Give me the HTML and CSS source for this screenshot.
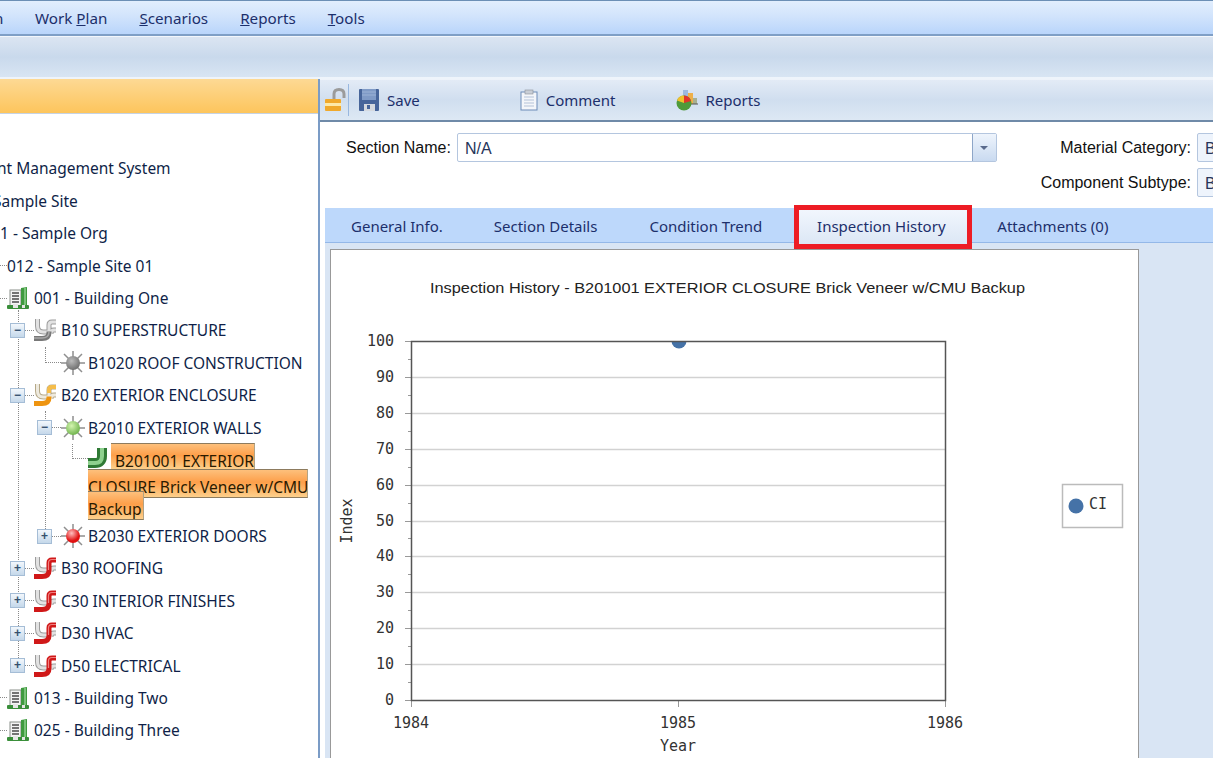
FILE: index.html
```html
<!DOCTYPE html>
<html lang="en">
<head>
  <meta charset="UTF-8">
  <title>Inspection History</title>
  <link rel="stylesheet" href="styles.css">
</head>
<body>
  <svg class="defs" width="0" height="0">
    <defs>
      <symbol id="building" viewBox="0 0 22 22">
        <rect x="3" y="3" width="11" height="16" fill="#f4f4f4" stroke="#8a8f8a"/>
        <path d="M5 6h7M5 9h7M5 12h7M5 15h7" stroke="#4a4a4a" stroke-width="1.600"/>
        <path d="M14 1l6 -1v20h-6z" fill="#3f9a3f"/>
        <path d="M18 1v18" stroke="#8fd08f" stroke-width="1.500"/>
        <rect x="0" y="18" width="22" height="4" rx="1" fill="#3a8f3a"/>
        <rect x="6" y="17" width="5" height="4" fill="#e6e6e6"/>
        <rect x="15" y="18" width="3" height="3" fill="#e6e6e6"/>
      </symbol>
      <symbol id="pipe-gray" viewBox="0 0 22 22">
        <path d="M3.500 0v7q0 6 6 6h4M22 3h-4q-3 0 -3 3v7M22 11h-2q-3 0 -3 3v1" fill="none" stroke="#9c9c9c" stroke-width="5"/>
        <path d="M3.500 0v7q0 6 6 6h4M22 3h-4q-3 0 -3 3v7M22 11h-2q-3 0 -3 3v1" fill="none" stroke="#e2e2e2" stroke-width="3"/>
        <path d="M0 19.500h8q7 0 7 -6v-1" fill="none" stroke="#787878" stroke-width="5"/>
        <path d="M0 19h8q7 0 7 -6" fill="none" stroke="#a8a8a8" stroke-width="1.500"/>
      </symbol>
      <symbol id="pipe-orange" viewBox="0 0 22 22">
        <path d="M3.500 0v7q0 6 6 6h4M22 3h-4q-3 0 -3 3v7M22 11h-2q-3 0 -3 3v1" fill="none" stroke="#b5a888" stroke-width="5"/>
        <path d="M3.500 0v7q0 6 6 6h4M22 3h-4q-3 0 -3 3v7M22 11h-2q-3 0 -3 3v1" fill="none" stroke="#eeeadf" stroke-width="3"/>
        <path d="M0 19.500h8q7 0 7 -6v-7q0 -3 3 -3h4" fill="none" stroke="#eda31c" stroke-width="0"/>
        <path d="M0 19.500h8q7 0 7 -6v-1" fill="none" stroke="#ee9410" stroke-width="5"/>
        <path d="M22 3h-4q-3 0 -3 3v3" fill="none" stroke="#f5bd4a" stroke-width="4"/>
      </symbol>
      <symbol id="pipe-red" viewBox="0 0 22 22">
        <path d="M3.500 0v7q0 6 6 6h4M22 11h-2q-3 0 -3 3v1" fill="none" stroke="#9c9c9c" stroke-width="5"/>
        <path d="M3.500 0v7q0 6 6 6h4M22 11h-2q-3 0 -3 3v1" fill="none" stroke="#e2e2e2" stroke-width="3"/>
        <path d="M22 3h-4q-3 0 -3 3v7.500q0 6 -7 6h-8" fill="none" stroke="#d01818" stroke-width="5"/>
        <path d="M22 2.500h-4q-3.500 0 -3.500 3.500v7" fill="none" stroke="#f08080" stroke-width="1.200"/>
      </symbol>
      <symbol id="sun" viewBox="0 0 24 24">
        <path d="M12 0v24M0 12h24M3 3l18 18M21 3L3 21" stroke="#8f8f8f" stroke-width="1.500"/>
      </symbol>
    </defs>
  </svg>

  <div class="menubar">
    <span class="menu-cut">n</span>
    <span class="menu-item">Work <u>P</u>lan</span>
    <span class="menu-item"><u>S</u>cenarios</span>
    <span class="menu-item"><u>R</u>eports</span>
    <span class="menu-item"><u>T</u>ools</span>
  </div>
  <div class="ribbon"></div>

  <div class="main">
    <div class="left">
      <div class="left-head"></div>
      <div class="tree">
        <span class="vline v1"></span>
        <span class="vline v2"></span>
        <div class="row"><span class="label cut-a">nt Management System</span></div>
        <div class="row"><span class="label cut-b">Sample Site</span></div>
        <div class="row"><span class="label">1 - Sample Org</span></div>
        <div class="row"><span class="dots short"></span><span class="label">012 - Sample Site 01</span></div>
        <div class="row"><span class="dots short"></span><svg class="ico"><use href="#building"/></svg><span class="label">001 - Building One</span></div>
        <div class="row lvl2"><span class="box">&minus;</span><span class="dots"></span><svg class="ico"><use href="#pipe-gray"/></svg><span class="label">B10 SUPERSTRUCTURE</span></div>
        <div class="row lvl3"><span class="elbow"></span><span class="sun"><svg class="ico"><use href="#sun"/></svg><i class="ball gray"></i></span><span class="label">B1020 ROOF CONSTRUCTION</span></div>
        <div class="row lvl2"><span class="box">&minus;</span><span class="dots"></span><svg class="ico"><use href="#pipe-orange"/></svg><span class="label">B20 EXTERIOR ENCLOSURE</span></div>
        <div class="row lvl3b"><span class="box">&minus;</span><span class="dots"></span><span class="sun"><svg class="ico"><use href="#sun"/></svg><i class="ball green"></i></span><span class="label">B2010 EXTERIOR WALLS</span></div>
        <div class="selected">
          <div class="sel-line first">
            <span class="elbow"></span>
            <svg class="ico elbow-pipe" viewBox="0 0 20 20"><path d="M14 0v8q0 7 -7 7h-7" fill="none" stroke="#2f7a35" stroke-width="10"/><path d="M14 0v8q0 7 -7 7h-7" fill="none" stroke="#8ed08e" stroke-width="4"/></svg>
            <span class="hl">B201001 EXTERIOR</span>
          </div>
          <div class="sel-line second"><span class="hl wide">CLOSURE Brick Veneer w/CMU</span></div>
          <div class="sel-line third"><span class="hl last">Backup</span></div>
        </div>
        <div class="row lvl3b"><span class="box">+</span><span class="dots"></span><span class="sun"><svg class="ico"><use href="#sun"/></svg><i class="ball red"></i></span><span class="label">B2030 EXTERIOR DOORS</span></div>
        <div class="row lvl2"><span class="box">+</span><span class="dots"></span><svg class="ico"><use href="#pipe-red"/></svg><span class="label">B30 ROOFING</span></div>
        <div class="row lvl2"><span class="box">+</span><span class="dots"></span><svg class="ico"><use href="#pipe-red"/></svg><span class="label">C30 INTERIOR FINISHES</span></div>
        <div class="row lvl2"><span class="box">+</span><span class="dots"></span><svg class="ico"><use href="#pipe-red"/></svg><span class="label">D30 HVAC</span></div>
        <div class="row lvl2"><span class="box">+</span><span class="dots"></span><svg class="ico"><use href="#pipe-red"/></svg><span class="label">D50 ELECTRICAL</span></div>
        <div class="row"><span class="dots short"></span><svg class="ico"><use href="#building"/></svg><span class="label">013 - Building Two</span></div>
        <div class="row"><span class="dots short"></span><svg class="ico"><use href="#building"/></svg><span class="label">025 - Building Three</span></div>
      </div>
    </div>

    <div class="right">
      <div class="toolbar">
        <svg class="tool-lock" width="22" height="24" viewBox="0 0 22 24">
          <path d="M9 11V6q0 -4.500 5 -4.500t5 4.500v4" fill="none" stroke="#9b9b9b" stroke-width="3"/>
          <rect x="0" y="11" width="16" height="12" rx="1" fill="#f0a92c"/>
          <rect x="0" y="15" width="16" height="3" fill="#fde9a8"/>
        </svg>
        <span class="tool-sep"></span>
        <div class="tool save">
          <svg width="20" height="22" viewBox="0 0 20 22">
            <rect x="0" y="0" width="20" height="22" rx="1" fill="#47659a"/>
            <rect x="3" y="0" width="14" height="11" fill="#7f9ac6"/>
            <path d="M3 3h14M3 6h14" stroke="#9cb2d6"/>
            <rect x="5" y="15" width="11" height="7" fill="#d5d9df"/>
            <rect x="8" y="16" width="3" height="4" fill="#47659a"/>
          </svg>
          <span>Save</span>
        </div>
        <div class="tool comment">
          <svg width="18" height="22" viewBox="0 0 18 22">
            <rect x="1" y="3" width="16" height="18" fill="#f4f6fa" stroke="#6d8bb8"/>
            <rect x="5" y="1" width="8" height="4" fill="#c9ced6" stroke="#8a8f98" stroke-width="0.600"/>
            <path d="M4 8h10M4 11h10M4 14h10M4 17h10" stroke="#b4c2d8"/>
          </svg>
          <span>Comment</span>
        </div>
        <div class="tool reports">
          <svg width="22" height="22" viewBox="0 0 22 22">
            <rect x="7" y="1" width="5" height="12" fill="#9db8e0"/>
            <rect x="12" y="4" width="5" height="11" fill="#eeb04a"/>
            <rect x="17" y="9" width="4" height="6" fill="#a8b090"/>
            <path d="M12 15h10" stroke="#555"/>
            <circle cx="8" cy="14" r="7.500" fill="#4f9a3a"/>
            <path d="M8 14V6.500A7.500 7.500 0 0 1 15 12z" fill="#e2342a"/>
            <path d="M8 14L1 11.500A7.500 7.500 0 0 1 8 6.500z" fill="#f0c02c"/>
          </svg>
          <span>Reports</span>
        </div>
      </div>

      <div class="form">
        <div class="form-col">
          <div class="field">
            <label>Section Name:</label>
            <div class="combo name">
              <span class="combo-text">N/A</span>
              <span class="combo-btn"><i></i></span>
            </div>
          </div>
        </div>
        <div class="form-col side">
          <div class="field">
            <label>Material Category:</label>
            <div class="combo cut"><span class="combo-text">B</span></div>
          </div>
          <div class="field">
            <label>Component Subtype:</label>
            <div class="combo cut"><span class="combo-text">B</span></div>
          </div>
        </div>
      </div>

      <div class="tabs">
        <span class="tab t1">General Info.</span>
        <span class="tab t2">Section Details</span>
        <span class="tab t3">Condition Trend</span>
        <span class="tab active">Inspection History</span>
        <span class="tab t5">Attachments (0)</span>
      </div>

      <div class="tab-body">
        <div class="chart-card">
          <svg class="chart" width="807" height="508" viewBox="331 250 807 508">
            <text class="title" x="727.500" y="293" text-anchor="middle" textLength="595" lengthAdjust="spacingAndGlyphs">Inspection History - B201001 EXTERIOR CLOSURE Brick Veneer w/CMU Backup</text>
            <g class="grid">
              <path d="M411 377.500H945M411 413.500H945M411 449.500H945M411 485.500H945M411 521.500H945M411 556.500H945M411 592.500H945M411 628.500H945M411 664.500H945"/>
            </g>
            <g class="ticks">
              <path d="M405 341.500H411M405 377.500H411M405 413.500H411M405 449.500H411M405 485.500H411M405 521.500H411M405 556.500H411M405 592.500H411M405 628.500H411M405 664.500H411M405 700.500H411"/>
              <path d="M408 359.500H411M408 395.500H411M408 431.500H411M408 467.500H411M408 503.500H411M408 538.500H411M408 574.500H411M408 610.500H411M408 646.500H411M408 682.500H411"/>
              <path d="M411.500 700V707M678.500 700V707M945.500 700V707"/>
            </g>
            <path class="dot" d="M671.500 341a7.500 7.500 0 0 0 15 0z"/>
            <rect class="plot" x="411.500" y="341.500" width="534" height="359"/>
            <g class="num">
              <text x="394" y="346">100</text>
              <text x="394" y="382">90</text>
              <text x="394" y="418">80</text>
              <text x="394" y="454">70</text>
              <text x="394" y="490">60</text>
              <text x="394" y="526">50</text>
              <text x="394" y="561">40</text>
              <text x="394" y="597">30</text>
              <text x="394" y="633">20</text>
              <text x="394" y="669">10</text>
              <text x="394" y="705">0</text>
            </g>
            <g class="num mid">
              <text x="411" y="728">1984</text>
              <text x="678" y="728">1985</text>
              <text x="945" y="728">1986</text>
            </g>
            <text class="axis" x="678" y="751" text-anchor="middle">Year</text>
            <text class="axis" transform="translate(352 521) rotate(-90)" text-anchor="middle">Index</text>
            <rect class="legend" x="1062.500" y="484.500" width="60" height="43"/>
            <circle class="dot" cx="1076" cy="506" r="7.500"/>
            <text class="axis" x="1089" y="509">CI</text>
          </svg>
        </div>
      </div>
    </div>
  </div>
</body>
</html>
```

FILE: styles.css
```css
html, body {
  margin: 0;
  padding: 0;
  height: 100%;
  overflow: hidden;
  background: #fff;
}
body {
  font-family: "Noto Sans", sans-serif;
  font-size: 15px;
  color: #15295e;
  width: 1213px;
  height: 758px;
}
.defs {
  position: absolute;
}

/* top bars */
.menubar {
  height: 36px;
  box-sizing: border-box;
  border-top: 1px solid #6c8fb5;
  border-bottom: 2px solid #7f9fc6;
  background: linear-gradient(#e2eefd, #d2e4fc 45%, #b9d5fb);
  display: flex;
  align-items: center;
  color: #1c2f6b;
  font-size: 15.200px;
}
.menu-cut {
  width: 41px;
  flex: none;
  margin-left: -6px;
}
.menu-item {
  margin-right: 32px;
}
.ribbon {
  height: 43px;
  box-sizing: border-box;
  border-top: 1px solid #f3f7fc;
  border-bottom: 2px solid #eef4fb;
  background: linear-gradient(#dbe5f2, #c9d9ec 50%, #d8e5f3);
}

.main {
  display: flex;
  height: 679px;
}

/* left tree */
.left {
  width: 320px;
  box-sizing: border-box;
  flex: none;
  border-right: 2px solid #7b9cc6;
  overflow: hidden;
}
.left-head {
  height: 35px;
  box-sizing: border-box;
  border-bottom: 1px solid #c6d3e4;
  background: linear-gradient(#fdd994, #fdc55c);
}
.tree {
  position: relative;
  padding-top: 38.300px;
  color: #0f1f48;
  font-size: 15.500px;
}
.vline {
  position: absolute;
  width: 0;
  border-left: 1px dotted #8a8a8a;
}
.v1 { left: 18px; top: 196px; height: 350px; }
.v2 { left: 45px; top: 297px; height: 118px; }

.row {
  position: relative;
  height: 32.400px;
  display: flex;
  align-items: center;
  white-space: nowrap;
}
.cut-a { margin-left: -3px; }
.cut-b { margin-left: -7px; }
.lvl2 { padding-left: 10px; }
.lvl3 { padding-left: 45px; }
.lvl3b { padding-left: 37px; }
.ico {
  width: 22px;
  height: 22px;
  flex: none;
  margin-right: 5px;
}
.dots {
  width: 9px;
  border-top: 1px dotted #8a8a8a;
  flex: none;
}
.dots.short {
  width: 7px;
}
.box {
  width: 15px;
  height: 15px;
  flex: none;
  box-sizing: border-box;
  border: 1px solid #a5bdd6;
  background: linear-gradient(#f2f7fc, #c5d8ea);
  color: #35506e;
  font: bold 12px/13px "Liberation Sans", sans-serif;
  text-align: center;
}
.elbow {
  width: 16px;
  height: 16px;
  margin-top: -16px;
  flex: none;
  box-sizing: border-box;
  border-left: 1px dotted #8a8a8a;
  border-bottom: 1px dotted #8a8a8a;
}
.sun {
  position: relative;
  width: 24px;
  margin-right: 3px;
  display: flex;
  flex: none;
}
.sun .ico {
  width: 24px;
  height: 24px;
  margin: 0;
}
.ball {
  position: absolute;
  left: 5px;
  top: 5px;
  width: 14px;
  height: 14px;
  border-radius: 50%;
}
.ball.gray { background: radial-gradient(circle at 40% 35%, #bbb, #555); }
.ball.green { background: radial-gradient(circle at 40% 35%, #d4f5b0, #4f9e2c); }
.ball.red { background: radial-gradient(circle at 40% 30%, #ffc0c0, #e01010 60%); }

.selected {
  position: relative;
  margin: -1px 0 0 88px;
  width: 220px;
  color: #2a1a00;
  white-space: nowrap;
}
.sel-line {
  display: flex;
}
.sel-line.first {
  height: 26px;
  margin-left: -16px;
}
.sel-line.second {
  height: 22px;
}
.sel-line.third {
  height: 29px;
  position: relative;
}
.sel-line .elbow {
  height: 15px;
  margin-top: 1px;
  align-self: flex-start;
}
.elbow-pipe {
  width: 20px;
  height: 20px;
  margin: 0 3px 1px 0;
  align-self: flex-end;
}
.hl {
  display: block;
  box-sizing: border-box;
  height: 29px;
  padding: 6px 1px 0 0;
  line-height: 22px;
  background: linear-gradient(#fdc07c, #fd9f4a 45%, #fdd08c);
  border-top: 1px solid #8d7b5e;
  border-right: 1px solid #b3a384;
  border-bottom: 1px solid #8d7b5e;
}
.sel-line.first .hl {
  height: 26px;
  padding: 6px 0 0 4px;
  border-bottom: 0;
}
.hl.wide {
  width: 220px;
  overflow: hidden;
}

/* right side */
.right {
  flex: 1;
  min-width: 0;
  overflow: hidden;
}
.toolbar {
  height: 43px;
  box-sizing: border-box;
  border-top: 1px solid #eef3fa;
  border-bottom: 2px solid #6f8aa8;
  background: linear-gradient(#e3ebf6, #d0deef 50%, #dde8f4);
  display: flex;
  align-items: center;
  color: #1c2f6b;
}
.tool-lock {
  margin-left: 5px;
}
.tool-sep {
  width: 1px;
  height: 32px;
  margin-left: 1px;
  background: #98b7df;
}
.tool {
  display: flex;
  align-items: center;
  gap: 8px;
}
.tool.save { margin-left: 10px; }
.tool.comment { margin-left: 100px; }
.tool.reports { margin-left: 60px; }

.form {
  height: 86px;
  display: flex;
  justify-content: space-between;
  font-family: "Liberation Sans", sans-serif;
  color: #111;
  font-size: 16px;
}
.form-col {
  padding-top: 11px;
}
.form-col.side {
  margin-right: -8px;
  display: flex;
  flex-direction: column;
  align-items: flex-end;
  gap: 6px;
}
.field {
  display: flex;
  align-items: center;
  gap: 6px;
}
.form-col:first-child .field {
  margin-left: 26px;
}
.combo {
  height: 29px;
  box-sizing: border-box;
  border: 1px solid #b4c6df;
  border-radius: 2px;
  background: #fff;
  display: flex;
  justify-content: space-between;
  align-items: center;
  color: #26355a;
  padding-left: 7px;
}
.combo-text {
  padding-top: 3px;
}
.combo.name {
  width: 540px;
}
.combo.cut {
  width: 24px;
  background: #eef4fc;
}
.combo-btn {
  width: 23px;
  height: 27px;
  background: linear-gradient(#eef4fc, #c9daf0);
  border-left: 1px solid #8ea6c8;
  display: flex;
  align-items: center;
  justify-content: center;
}
.combo-btn i {
  border-left: 4px solid transparent;
  border-right: 4px solid transparent;
  border-top: 4px solid #5a6a8c;
}

.tabs {
  margin-left: 5px;
  height: 35px;
  box-sizing: border-box;
  background: #bdd8fb;
  border-bottom: 1px solid #94b8e8;
  display: flex;
  align-items: center;
  color: #1c2f6b;
}
.tab {
  flex: none;
  padding-top: 2px;
}
.t1 { margin-left: 26px; }
.t2 { margin-left: 51px; }
.t3 { margin-left: 52px; }
.t5 { margin-left: 30px; }
.tab.active {
  position: relative;
  z-index: 1;
  align-self: flex-start;
  box-sizing: border-box;
  width: 168px;
  height: 34px;
  line-height: 32px;
  margin: 2px 0 0 37px;
  padding: 0 4px 0 0;
  text-align: center;
  background: linear-gradient(#f1f6fd, #dce7f5);
  outline: 5px solid #ed1c24;
}
.tab-body {
  margin-left: 5px;
  height: 515px;
  padding: 6px 0 0 5px;
  box-sizing: border-box;
  background: #d9e5f4;
}
.chart-card {
  width: 807px;
  height: 520px;
  border: 1px solid #999;
  background: #fff;
}

/* chart */
.chart {
  display: block;
  font-family: "DejaVu Sans Mono", monospace;
}
.chart .title {
  font-family: "Liberation Sans", sans-serif;
  font-size: 15.500px;
  fill: #222;
}
.grid path {
  stroke: #d2d2d2;
  stroke-width: 1.500;
  fill: none;
}
.ticks path {
  stroke: #999;
  fill: none;
}
.plot {
  fill: none;
  stroke: #555;
  stroke-width: 1.500;
}
.dot {
  fill: #4572a7;
}
.num text {
  font-size: 15px;
  fill: #333;
  text-anchor: end;
}
.num.mid text {
  text-anchor: middle;
}
.axis {
  font-size: 15px;
  fill: #333;
}
.legend {
  fill: #fff;
  stroke: #bbb;
  stroke-width: 1.500;
}
```
